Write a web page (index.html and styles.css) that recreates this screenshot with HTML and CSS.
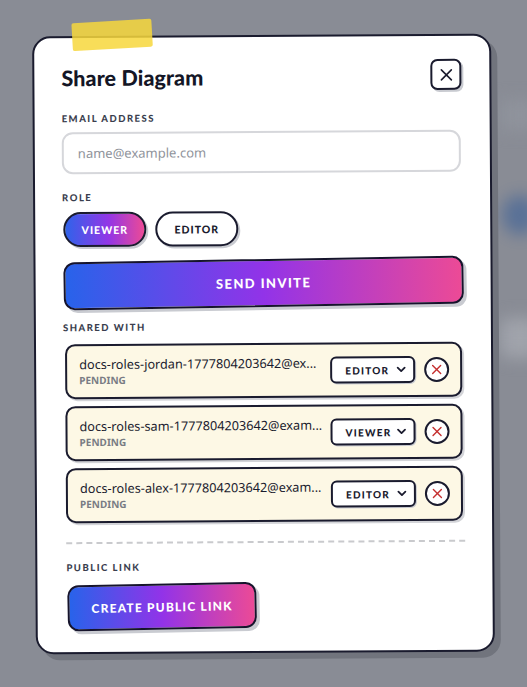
FILE: index.html
```
<!DOCTYPE html>
<html lang="en">
<head>
<meta charset="utf-8">
<title>Share Diagram</title>
<link rel="stylesheet" href="styles.css">
</head>
<body>
<div class="backdrop">
  <div class="blob blob-blue"></div>
  <div class="blob blob-light"></div>
  <div class="blob blob-light2"></div>
</div>
<div class="overlay">
  <div class="modal">
    <div class="tape"></div>
    <div class="header">
      <h2 class="title">Share Diagram</h2>
      <button class="close" aria-label="Close">
        <svg width="14" height="14" viewBox="0 0 14 14"><path d="M2 2 L12 12 M12 2 L2 12" stroke="#1a1b2e" stroke-width="1.6" stroke-linecap="round"/></svg>
      </button>
    </div>

    <div class="label label-email">EMAIL ADDRESS</div>
    <div class="input">name@example.com</div>

    <div class="label label-role">ROLE</div>
    <div class="pills">
      <button class="pill pill-active">VIEWER</button>
      <button class="pill">EDITOR</button>
    </div>

    <button class="send">SEND INVITE</button>

    <div class="label label-shared">SHARED WITH</div>
    <div class="rows">
      <div class="row">
        <div class="who">
          <div class="email">docs-roles-jordan-1777804203642@ex...</div>
          <div class="status">PENDING</div>
        </div>
        <div class="select">EDITOR<svg width="10" height="7" viewBox="0 0 10 7"><path d="M1.5 1.5 L5 5 L8.5 1.5" fill="none" stroke="#1a1b2e" stroke-width="1.8" stroke-linecap="round" stroke-linejoin="round"/></svg></div>
        <div class="remove"><svg width="11" height="11" viewBox="0 0 11 11"><path d="M1.5 1.5 L9.5 9.5 M9.5 1.5 L1.5 9.5" stroke="#c53030" stroke-width="1.4" stroke-linecap="round"/></svg></div>
      </div>
      <div class="row">
        <div class="who">
          <div class="email">docs-roles-sam-1777804203642@exam...</div>
          <div class="status">PENDING</div>
        </div>
        <div class="select">VIEWER<svg width="10" height="7" viewBox="0 0 10 7"><path d="M1.5 1.5 L5 5 L8.5 1.5" fill="none" stroke="#1a1b2e" stroke-width="1.8" stroke-linecap="round" stroke-linejoin="round"/></svg></div>
        <div class="remove"><svg width="11" height="11" viewBox="0 0 11 11"><path d="M1.5 1.5 L9.5 9.5 M9.5 1.5 L1.5 9.5" stroke="#c53030" stroke-width="1.4" stroke-linecap="round"/></svg></div>
      </div>
      <div class="row">
        <div class="who">
          <div class="email">docs-roles-alex-1777804203642@exam...</div>
          <div class="status">PENDING</div>
        </div>
        <div class="select">EDITOR<svg width="10" height="7" viewBox="0 0 10 7"><path d="M1.5 1.5 L5 5 L8.5 1.5" fill="none" stroke="#1a1b2e" stroke-width="1.8" stroke-linecap="round" stroke-linejoin="round"/></svg></div>
        <div class="remove"><svg width="11" height="11" viewBox="0 0 11 11"><path d="M1.5 1.5 L9.5 9.5 M9.5 1.5 L1.5 9.5" stroke="#c53030" stroke-width="1.4" stroke-linecap="round"/></svg></div>
      </div>
    </div>

    <div class="divider"></div>

    <div class="label label-public">PUBLIC LINK</div>
    <button class="create">CREATE PUBLIC LINK</button>
  </div>
</div>
</body>
</html>
```
FILE: styles.css
```
* { box-sizing: border-box; }
html, body { margin: 0; padding: 0; }
body {
  background: #898c95;
  min-height: 100vh;
  overflow: hidden;
  font-family: "Noto Sans", "Open Sans", sans-serif;
  color: #1a1b2e;
}
.backdrop {
  position: absolute;
  inset: 0;
  overflow: hidden;
}
.blob {
  position: absolute;
  filter: blur(8px);
}
.blob-blue {
  left: 502px; top: 195px; width: 36px; height: 40px;
  background: #3a5f98;
  border-radius: 50%;
  opacity: 0.6;
}
.blob-light {
  left: 500px; top: 318px; width: 40px; height: 40px;
  background: #a0a3ab;
  border-radius: 8px;
}
.blob-light2 {
  left: 500px; top: 100px; width: 40px; height: 30px;
  background: #8f939c;
}
.overlay {
  position: relative;
  min-height: 100vh;
  display: flex;
  align-items: center;
  justify-content: center;
}
.modal {
  position: relative;
  width: 459px;
  background: #ffffff;
  border: 2px solid #1a1b2e;
  border-radius: 18px;
  box-shadow: 6px 6px 0 #71747d;
  padding: 23px 29px 22px 27px;
  transform: rotate(-0.35deg);
}
.tape {
  position: absolute;
  left: 38px;
  top: -17px;
  width: 80px;
  height: 28px;
  background: rgba(247, 215, 60, 0.85);
  transform: rotate(-3deg);
  border-radius: 2px;
}
.header {
  display: flex;
  align-items: center;
  justify-content: space-between;
  height: 31px;
}
.title {
  margin: 0;
  font-family: Lato, "Noto Sans", sans-serif;
  font-weight: 900;
  font-size: 21.5px;
  letter-spacing: 0.1px;
  color: #141626;
  padding-top: 3px;
}
.close {
  width: 31px;
  height: 31px;
  border: 2px solid #1a1b2e;
  border-radius: 7px;
  background: #fff;
  box-shadow: 2px 2px 0 #c9cbd1;
  display: flex;
  align-items: center;
  justify-content: center;
  padding: 0;
  margin-right: -1px;
}
.label {
  font-family: Lato, "Noto Sans", sans-serif;
  font-weight: 900;
  font-size: 9.5px;
  line-height: 12px;
  letter-spacing: 1.5px;
  color: #3a3e4e;
}
.label-email { margin-top: 21px; }
.input {
  margin-top: 7px;
  height: 42px;
  border: 2px solid #d6d7db;
  border-radius: 11px;
  padding: 0 14px;
  display: flex;
  align-items: center;
  font-size: 13px;
  color: #8f939b;
}
.label-role { margin-top: 18px; }
.pills {
  display: flex;
  gap: 9px;
  margin-top: 8px;
  padding-left: 1px;
}
.pill {
  height: 35px;
  width: 83px;
  border: 2px solid #1a1b2e;
  border-radius: 18px;
  background: #fff;
  box-shadow: 2px 2px 0 #c9cbd1;
  font-family: Lato, "Noto Sans", sans-serif;
  font-weight: 900;
  font-size: 10.5px;
  letter-spacing: 1px;
  color: #1a1b2e;
  padding: 0;
}
.pill-active {
  background: linear-gradient(90deg, #2f63ea 0%, #9336e6 55%, #ec4a96 100%);
  color: #fff;
}
.send {
  display: block;
  width: 400px;
  height: 48px;
  margin-top: 13px;
  margin-left: 1px;
  border: 2px solid #16142c;
  border-radius: 11px;
  background: linear-gradient(90deg, #2863ea 0%, #9233e8 50%, #ec4a96 100%);
  box-shadow: 3px 3px 0 #c9cbd1;
  color: #fff;
  font-family: Lato, "Noto Sans", sans-serif;
  font-weight: 900;
  font-size: 13px;
  letter-spacing: 1.4px;
  transform: rotate(-0.6deg);
}
.label-shared { margin-top: 14px; }
.rows {
  margin-top: 10px;
  display: flex;
  flex-direction: column;
  gap: 7px;
  padding-left: 2px;
}
.row {
  height: 55px;
  background: #fdf8e5;
  border: 2px solid #1a1b2e;
  border-radius: 10px;
  box-shadow: 2px 2px 0 #d3d4d8;
  display: flex;
  align-items: center;
  padding: 0 11px 0 12px;
}
.who {
  flex: 1;
  min-width: 0;
}
.email {
  font-size: 12.7px;
  line-height: 17px;
  color: #1a1b2e;
  white-space: nowrap;
}
.status {
  font-size: 10px;
  font-weight: 700;
  line-height: 13px;
  color: #797c84;
  margin-top: 1px;
}
.select {
  width: 85px;
  height: 27px;
  border: 2px solid #1a1b2e;
  border-radius: 6px;
  background: #fff;
  box-shadow: 1px 1px 0 #c9cbd1;
  display: flex;
  align-items: center;
  justify-content: space-between;
  padding: 0 7px 0 13px;
  font-family: Lato, "Noto Sans", sans-serif;
  font-weight: 900;
  font-size: 10px;
  letter-spacing: 1.2px;
  margin-left: 8px;
}
.remove {
  width: 25px;
  height: 25px;
  border: 2px solid #1a1b2e;
  border-radius: 50%;
  background: #fff;
  margin-left: 9px;
  display: flex;
  align-items: center;
  justify-content: center;
}
.divider {
  margin-top: 19px;
  height: 0;
  border-top: 2px dashed #c9cacd;
  margin-left: 2px;
  margin-right: -2px;
}
.label-public { margin-top: 18px; margin-left: 2px; }
.create {
  display: block;
  margin-top: 10px;
  margin-left: 3px;
  width: 189px;
  height: 46px;
  border: 2px solid #16142c;
  border-radius: 11px;
  background: linear-gradient(90deg, #2863ea 0%, #9233e8 50%, #ec4a96 100%);
  box-shadow: 3px 3px 0 #c9cbd1;
  color: #fff;
  font-family: Lato, "Noto Sans", sans-serif;
  font-weight: 900;
  font-size: 12px;
  letter-spacing: 1.2px;
  transform: rotate(-0.8deg);
  padding: 0;
}
```
